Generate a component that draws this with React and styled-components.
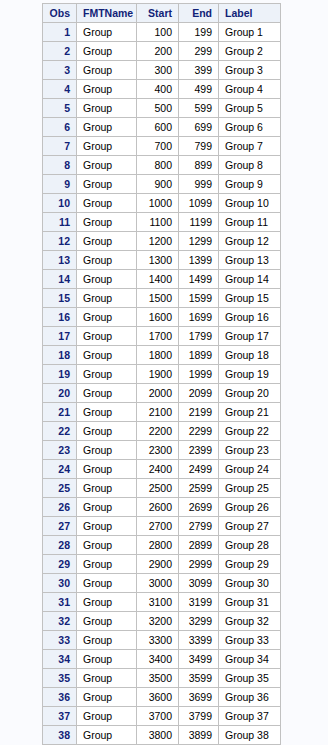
import React from "react";
import styled, { createGlobalStyle } from "styled-components";

const GlobalStyle = createGlobalStyle`
  html, body {
    margin: 0;
    padding: 0;
    background: #fafbfe;
  }
  body {
    font-family: "Liberation Sans", Arial, sans-serif;
  }
`;

const Page = styled.div`
  padding: 3px 0 0 42px;
`;

const Table = styled.table`
  border-collapse: collapse;
  table-layout: fixed;
  width: 238px;
  font-size: 10.5px;
  border: 1px solid #c1c1c1;
`;

const Head = styled.th`
  height: 18px;
  padding: 0 6px;
  background: #edf2f9;
  color: #112277;
  font-weight: bold;
  text-align: ${(props) => (props.left ? "left" : "right")};
  border: 1px solid #c1c1c1;
  white-space: nowrap;
`;

const RowHead = styled.th`
  height: 18px;
  padding: 0 6px;
  background: #edf2f9;
  color: #112277;
  font-weight: bold;
  text-align: right;
  border: 1px solid #c1c1c1;
`;

const Cell = styled.td`
  height: 18px;
  padding: 0 6px;
  background: #ffffff;
  color: #000000;
  text-align: ${(props) => (props.left ? "left" : "right")};
  border: 1px solid #c1c1c1;
  white-space: nowrap;
`;

const rows = Array.from({ length: 38 }, (_, i) => i + 1);

const App = () => (
  <>
    <GlobalStyle />
    <Page>
      <Table>
        <colgroup>
          <col style={{ width: 34 }} />
          <col style={{ width: 60 }} />
          <col style={{ width: 42 }} />
          <col style={{ width: 40 }} />
          <col style={{ width: 62 }} />
        </colgroup>
        <thead>
          <tr>
            <Head>Obs</Head>
            <Head left>FMTName</Head>
            <Head>Start</Head>
            <Head>End</Head>
            <Head left>Label</Head>
          </tr>
        </thead>
        <tbody>
          {rows.map((n) => (
            <tr key={n}>
              <RowHead>{n}</RowHead>
              <Cell left>Group</Cell>
              <Cell>{n * 100}</Cell>
              <Cell>{n * 100 + 99}</Cell>
              <Cell left>Group {n}</Cell>
            </tr>
          ))}
        </tbody>
      </Table>
    </Page>
  </>
);

export default App;
